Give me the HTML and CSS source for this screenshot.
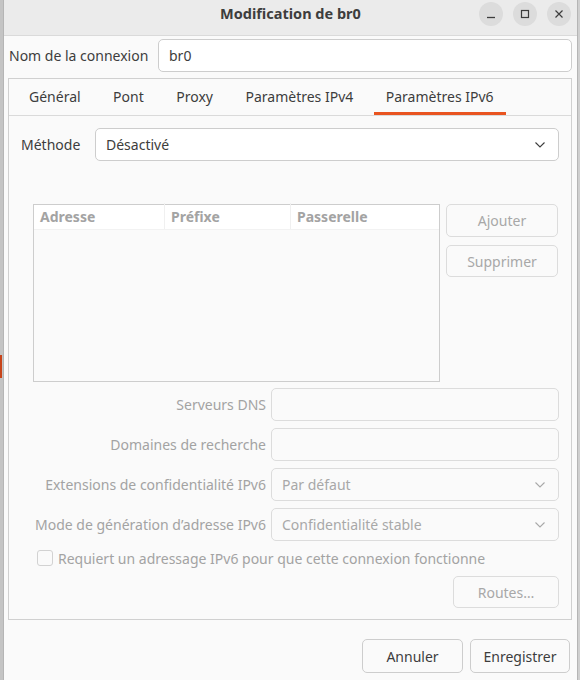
FILE: index.html
```html
<!DOCTYPE html>
<html lang="fr">
<head>
<meta charset="utf-8">
<title>Modification de br0</title>
<link rel="stylesheet" href="styles.css">
</head>
<body>
<div class="backdrop">
  <div class="bg-strip"><span class="bg-accent"></span></div>
  <div class="window">
    <div class="titlebar">
      <div class="title">Modification de br0</div>
      <div class="wm-buttons">
        <span class="wm-btn"><svg width="12" height="12" viewBox="0 0 12 12"><path d="M2 9.5h8" stroke="#3d3d3d" stroke-width="1.3" fill="none"/></svg></span>
        <span class="wm-btn"><svg width="12" height="12" viewBox="0 0 12 12"><rect x="2.5" y="2.5" width="7" height="7" stroke="#3d3d3d" stroke-width="1.2" fill="none"/></svg></span>
        <span class="wm-btn"><svg width="12" height="12" viewBox="0 0 12 12"><path d="M2.5 2.5l7 7M9.5 2.5l-7 7" stroke="#3d3d3d" stroke-width="1.2" fill="none"/></svg></span>
      </div>
    </div>
    <div class="content">
      <div class="name-row">
        <label class="name-label">Nom de la connexion</label>
        <div class="entry name-entry">br0</div>
      </div>
      <div class="notebook">
        <div class="tabs">
          <div class="tab">Général</div>
          <div class="tab">Pont</div>
          <div class="tab">Proxy</div>
          <div class="tab">Paramètres IPv4</div>
          <div class="tab active">Paramètres IPv6</div>
        </div>
        <div class="page">
          <div class="method-row">
            <span class="method-label">Méthode</span>
            <div class="combo"><span>Désactivé</span><svg class="chev" width="12" height="8" viewBox="0 0 12 8"><path d="M1.5 1.5l4.5 4.5 4.5-4.5" stroke="#3d3d3d" stroke-width="1.1" fill="none"/></svg></div>
          </div>
          <div class="addr-row">
            <div class="table">
              <div class="thead">
                <div class="th c1">Adresse</div>
                <div class="th c2">Préfixe</div>
                <div class="th c3">Passerelle</div>
              </div>
            </div>
            <div class="side-buttons">
              <div class="btn dis">Ajouter</div>
              <div class="btn dis">Supprimer</div>
            </div>
          </div>
          <div class="form-grid">
            <span class="flabel">Serveurs DNS</span>
            <div class="entry dis-entry"></div>
            <span class="flabel">Domaines de recherche</span>
            <div class="entry dis-entry"></div>
            <span class="flabel">Extensions de confidentialité IPv6</span>
            <div class="combo dis-entry"><span>Par défaut</span><svg class="chev" width="12" height="8" viewBox="0 0 12 8"><path d="M1.5 1.5l4.5 4.5 4.5-4.5" stroke="#a8a8a8" stroke-width="1.1" fill="none"/></svg></div>
            <span class="flabel">Mode de génération d’adresse IPv6</span>
            <div class="combo dis-entry"><span>Confidentialité stable</span><svg class="chev" width="12" height="8" viewBox="0 0 12 8"><path d="M1.5 1.5l4.5 4.5 4.5-4.5" stroke="#a8a8a8" stroke-width="1.1" fill="none"/></svg></div>
          </div>
          <div class="check-row">
            <span class="checkbox"></span>
            <span class="check-label">Requiert un adressage IPv6 pour que cette connexion fonctionne</span>
          </div>
          <div class="routes-row">
            <div class="btn dis routes">Routes…</div>
          </div>
        </div>
      </div>
      <div class="actions">
        <div class="btn action">Annuler</div>
        <div class="btn action save">Enregistrer</div>
      </div>
    </div>
  </div>
</div>
</body>
</html>
```

FILE: styles.css
```css
html, body {
  margin: 0;
  padding: 0;
  height: 100%;
}
body {
  background: #cfcfcf;
  font-family: "Noto Sans", "Open Sans", sans-serif;
  font-size: 14px;
  color: #3d3d3d;
  overflow: hidden;
}
.backdrop {
  display: flex;
  height: 680px;
}
.bg-strip {
  width: 3px;
  flex: none;
  background: #c4c4c4;
  display: flex;
  flex-direction: column;
}
.bg-accent {
  display: block;
  margin-top: 355px;
  height: 23px;
  width: 2px;
  background: #c7441a;
}
.window {
  width: 573px;
  flex: none;
  border-left: 1px solid #b5b5b5;
  border-right: 1px solid #b5b5b5;
  background: #fafafa;
  display: flex;
  flex-direction: column;
}
.titlebar {
  height: 35px;
  background: #ebebeb;
  border-bottom: 1px solid #dadada;
  display: flex;
  align-items: center;
  justify-content: center;
  position: relative;
}
.title {
  font-weight: bold;
  font-size: 14.5px;
  color: #3d3d3d;
  margin-top: -10px;
}
.wm-buttons {
  position: absolute;
  right: 6px;
  top: 2px;
  display: flex;
  gap: 10px;
}
.wm-btn {
  width: 24px;
  height: 24px;
  border-radius: 50%;
  background: #dcdcdc;
  display: flex;
  align-items: center;
  justify-content: center;
}
.content {
  padding: 2px 5px 0 4px;
  display: flex;
  flex-direction: column;
}
.name-row {
  display: flex;
  align-items: center;
  height: 34px;
  padding-left: 1px;
}
.name-label {
  width: 149px;
  flex: none;
}
.entry {
  box-sizing: border-box;
  height: 33px;
  border: 1px solid #cdcdcd;
  border-radius: 5px;
  background: #fff;
  display: flex;
  align-items: center;
  padding-left: 10px;
}
.name-entry {
  flex: 1;
}
.notebook {
  margin-top: 6px;
  width: 564px;
  box-sizing: border-box;
  border: 1px solid #d0d0d0;
  background: #fafafa;
}
.tabs {
  height: 36px;
  display: flex;
  gap: 8.5px;
  padding-left: 8px;
  border-bottom: 1px solid #dadada;
  background: #fafafa;
}
.tab {
  padding: 0 12px;
  display: flex;
  align-items: center;
  box-sizing: border-box;
  height: 36px;
  border-bottom: 3px solid transparent;
  padding-top: 1px;
}
.tab.active {
  border-bottom-color: #e95420;
}
.page {
  padding: 12px 12px 11px 12px;
  display: flex;
  flex-direction: column;
}
.method-row {
  display: flex;
  align-items: center;
}
.method-label {
  width: 74px;
  flex: none;
}
.combo {
  box-sizing: border-box;
  flex: 1;
  height: 33px;
  border: 1px solid #cdcdcd;
  border-radius: 5px;
  background: #fff;
  display: flex;
  align-items: center;
  justify-content: space-between;
  padding: 0 12px 0 10px;
}
.addr-row {
  display: flex;
  margin-top: 43px;
  margin-left: 12px;
  gap: 6px;
}
.table {
  box-sizing: border-box;
  width: 407px;
  height: 178px;
  border: 1px solid #cdcdcd;
  background: #fafafa;
}
.thead {
  display: flex;
  height: 24px;
  background: #fff;
  border-bottom: 1px solid #f2f2f2;
}
.th {
  box-sizing: border-box;
  font-weight: bold;
  color: #a3a3a3;
  padding-left: 6px;
  display: flex;
  align-items: center;
  margin-top: -2px;
}
.c1 { width: 131px; border-right: 1px solid #f0f0f0; }
.c2 { width: 126px; border-right: 1px solid #f0f0f0; }
.c3 { flex: 1; }
.side-buttons {
  display: flex;
  flex-direction: column;
  gap: 8px;
  width: 112px;
}
.btn {
  box-sizing: border-box;
  height: 33px;
  border: 1px solid #cdcdcd;
  border-radius: 5px;
  background: #fafafa;
  display: flex;
  align-items: center;
  justify-content: center;
}
.btn.dis {
  color: #a8a8a8;
  border-color: #dcdcdc;
}
.side-buttons .btn:nth-child(2) {
  height: 32px;
}
.form-grid {
  display: grid;
  grid-template-columns: 233px 1fr;
  column-gap: 5px;
  row-gap: 7px;
  margin-left: 12px;
  margin-top: 6px;
  align-items: center;
}
.flabel {
  text-align: right;
  color: #a3a3a3;
}
.dis-entry {
  background: #fafafa;
  border-color: #dcdcdc;
  color: #a8a8a8;
}
.check-row {
  display: flex;
  align-items: center;
  margin-top: 8px;
  margin-left: 16px;
  gap: 5px;
  height: 18px;
}
.checkbox {
  box-sizing: border-box;
  width: 16px;
  height: 16px;
  border: 1px solid #d2d2d2;
  border-radius: 3px;
  background: #fafafa;
}
.check-label {
  color: #a3a3a3;
}
.routes-row {
  display: flex;
  justify-content: flex-end;
  margin-top: 9px;
}
.routes {
  width: 106px;
  height: 32px;
}
.actions {
  display: flex;
  justify-content: flex-end;
  gap: 7px;
  margin-top: 19px;
  padding-right: 2px;
}
.action {
  height: 34px;
  background: #fafafa;
  border-color: #cdcdcd;
  color: #3d3d3d;
  width: 101px;
}
.save {
  width: 100px;
}
```
